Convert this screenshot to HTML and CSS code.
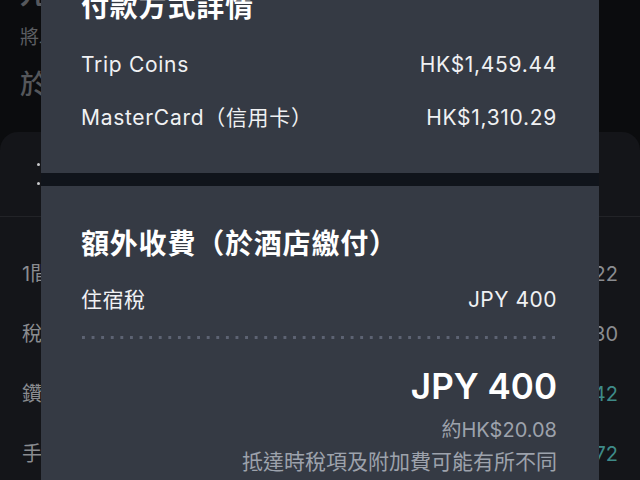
FILE: index.html
```html
<!DOCTYPE html>
<html lang="zh-Hant">
<head>
<meta charset="utf-8">
<title>付款方式詳情</title>
<link rel="stylesheet" href="styles.css">
</head>
<body>
<div class="page">
  <div class="hdr">
    <div class="hdr-title">九州大飯店</div>
    <div class="hdr-sub">將以港幣收取費用</div>
    <div class="hdr-big">於網上付款</div>
  </div>
  <div class="card">
    <div class="tabs">
      <div class="specks"><i></i><i></i></div>
    </div>
    <div class="rows">
      <div class="row"><span>1間客房 × 1晚</span><span>HK$2,769.22</span></div>
      <div class="row"><span>稅項及附加費</span><span>HK$413.30</span></div>
      <div class="row"><span>鑽石會員折扣</span><span class="teal">-HK$138.42</span></div>
      <div class="row"><span>手續費減免</span><span class="teal">-HK$13.72</span></div>
    </div>
  </div>
</div>

<div class="sheet">
  <section class="sec sec-pay">
    <h2 class="title">付款方式詳情</h2>
    <div class="line"><span>Trip Coins</span><span>HK$1,459.44</span></div>
    <div class="line"><span>MasterCard（信用卡）</span><span>HK$1,310.29</span></div>
  </section>
  <div class="band"></div>
  <section class="sec sec-extra">
    <h2 class="title">額外收費（於酒店繳付）</h2>
    <div class="item"><span>住宿稅</span><span>JPY 400</span></div>
    <div class="dots"></div>
    <div class="total">JPY 400</div>
    <div class="note">約HK$20.08</div>
    <div class="note">抵達時稅項及附加費可能有所不同</div>
  </section>
</div>
</body>
</html>
```

FILE: styles.css
```css
html, body {
  margin: 0;
  padding: 0;
  height: 100%;
  overflow: hidden;
}

body {
  background: #0b0c0e;
  font-family: Inter, "Noto Sans CJK TC", sans-serif;
  color: #f2f3f5;
  position: relative;
  text-spacing-trim: space-all;
}

/* ---------- background page (dimmed) ---------- */
.page {
  height: 100%;
  display: flex;
  flex-direction: column;
}

.hdr {
  padding: 0 20px;
  margin-top: -23px;
  color: #56585c;
}

.hdr-title {
  font-size: 26px;
  line-height: 36px;
  font-weight: 700;
  white-space: nowrap;
}

.hdr-sub {
  margin-top: 10px;
  font-size: 19px;
  line-height: 30px;
  color: #5c5e62;
  white-space: nowrap;
}

.hdr-big {
  margin-top: 12px;
  font-size: 27px;
  line-height: 40px;
  font-weight: 500;
  color: #55575b;
  white-space: nowrap;
}

.card {
  margin-top: 27px;
  flex: 1;
  background: #141519;
  border-radius: 18px 18px 0 0;
}

.tabs {
  height: 84px;
  border-bottom: 1px solid #222327;
  display: flex;
}

.specks {
  margin-left: 37px;
  padding-top: 31px;
  display: flex;
  flex-direction: column;
  gap: 16px;
}

.specks i {
  display: block;
  width: 3px;
  height: 3px;
  border-radius: 50%;
  background: #c9cacc;
}

.rows {
  padding: 27px 22px 0;
}

.row {
  display: flex;
  justify-content: space-between;
  font-size: 20px;
  line-height: 60px;
  color: #8a8c90;
  white-space: nowrap;
}

.row .teal {
  color: #3e8a88;
}

/* ---------- bottom sheet ---------- */
.sheet {
  position: absolute;
  left: 41px;
  top: -13px;
  width: 558px;
  height: 520px;
  display: flex;
  flex-direction: column;
  box-shadow: inset -3px 0 0 #31363f;
}

.sec {
  background: #353a44;
  padding: 0 42px 0 40px;
}

.sec-pay {
  padding-bottom: 29px;
}

.sec-extra {
  flex: 1;
  padding-top: 38px;
}

.band {
  height: 13px;
  background: #10141b;
  flex: none;
}

.title {
  margin: 0;
  font-size: 28px;
  line-height: 40px;
  font-weight: 700;
  letter-spacing: 0.8px;
  color: #ffffff;
  white-space: nowrap;
}

.sec-pay .title {
  margin-bottom: 11px;
}

.line {
  display: flex;
  justify-content: space-between;
  font-size: 21px;
  line-height: 53px;
  letter-spacing: 0.7px;
  color: #f0f1f3;
  white-space: nowrap;
}

.item {
  margin-top: 21px;
  display: flex;
  justify-content: space-between;
  font-size: 21px;
  line-height: 30px;
  letter-spacing: 0.5px;
  color: #f0f1f3;
  white-space: nowrap;
}

.dots {
  margin-top: 21px;
  height: 3px;
  margin-left: 1px;
  background-image: linear-gradient(to right, #5d6373 3px, transparent 3px);
  background-size: 9.6px 3px;
  background-repeat: repeat-x;
}

.total {
  margin-top: 25px;
  text-align: right;
  font-size: 35px;
  line-height: 44px;
  font-weight: 600;
  color: #ffffff;
}

.note {
  text-align: right;
  font-size: 20px;
  line-height: 31px;
  color: #9da2ac;
  white-space: nowrap;
}

.total + .note {
  margin-top: 7px;
}

.note + .note {
  font-size: 21px;
}
```
